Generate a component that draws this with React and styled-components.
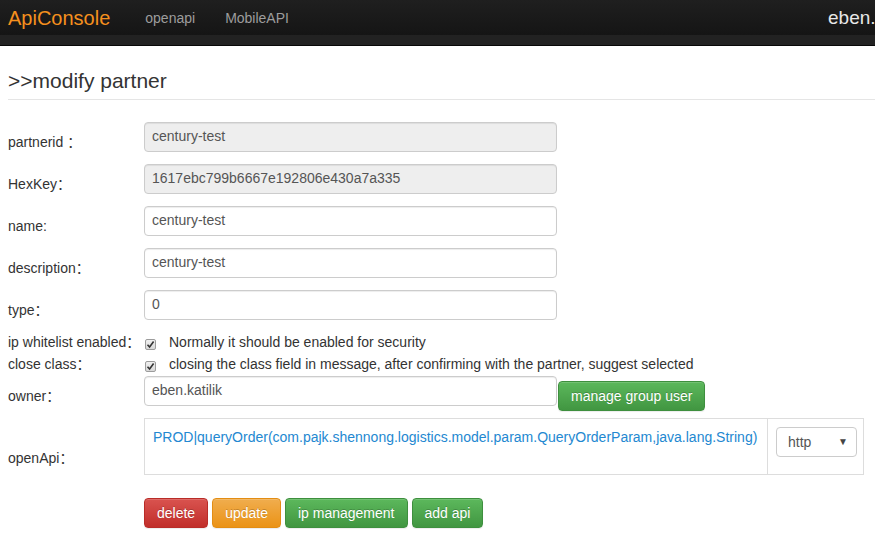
import React from "react";
import styled, { createGlobalStyle } from "styled-components";

const Global = createGlobalStyle`
  html, body { margin: 0; padding: 0; background: #fff; }
  body {
    font-family: "Liberation Sans", Arial, "Noto Sans CJK SC", sans-serif;
    font-size: 14px;
    line-height: 20px;
    color: #333;
    overflow: hidden;
  }
  * { box-sizing: border-box; }
`;

const Navbar = styled.div`
  background: #222;
  border-bottom: 1px solid #080808;
  height: 46px;
  overflow: hidden;
`;

const NavTop = styled.div`
  height: 35px;
  display: flex;
  align-items: center;
  padding-left: 8px;
  background: linear-gradient(#1f1f1f, #151515);
`;

const Brand = styled.span`
  font-size: 20px;
  color: #f5901e;
  margin-right: 35px;
  line-height: 30px;
`;

const NavLink = styled.span`
  color: #9d9d9d;
  font-size: 14px;
  margin-right: 30px;
`;

const NavUser = styled.span`
  margin-left: auto;
  flex: 0 0 47px;
  overflow: hidden;
  white-space: nowrap;
  color: #e8e8e8;
  font-size: 19px;
`;

const Page = styled.div`
  padding: 0 0 0 8px;
`;

const Title = styled.h3`
  margin: 0;
  padding-top: 24px;
  font-size: 21px;
  font-weight: normal;
  line-height: 22px;
  color: #333;
`;

const Rule = styled.hr`
  margin: 7px 0 22px;
  border: 0;
  border-top: 1px solid #e5e5e5;
`;

const Row = styled.div`
  display: grid;
  grid-template-columns: 136px auto;
  align-items: start;
  margin-bottom: ${(p) => p.$gap ?? 12}px;
`;

const Label = styled.div`
  padding-top: ${(p) => p.$pad ?? 10}px;
  white-space: nowrap;
`;

const Input = styled.div`
  width: 413px;
  height: 30px;
  padding: 0 7px;
  border: 1px solid #ccc;
  border-radius: 4px;
  background: ${(p) => (p.$disabled ? "#eee" : "#fff")};
  color: #555;
  line-height: 26px;
  box-shadow: inset 0 1px 1px rgba(0, 0, 0, 0.075);
`;

const CheckLine = styled.div`
  display: flex;
  align-items: center;
  gap: 13px;
  margin-left: 1px;
`;

const Box = styled.span`
  width: 11px;
  height: 11px;
  margin-top: 4px;
  border: 1px solid #9c9c9c;
  border-radius: 2px;
  background: linear-gradient(#f0f0f0, #d8d8d8);
  display: inline-flex;
  align-items: center;
  justify-content: center;
`;

const Inline = styled.div`
  display: flex;
  align-items: flex-start;
  gap: 1px;
`;

const Btn = styled.span`
  display: inline-block;
  height: 30px;
  padding: 0 12px;
  line-height: 28px;
  font-size: 14px;
  color: #fff;
  border-radius: 4px;
  border: 1px solid ${(p) => p.$border};
  background: linear-gradient(${(p) => p.$from}, ${(p) => p.$to});
  text-shadow: 0 -1px 0 rgba(0, 0, 0, 0.2);
  box-shadow: inset 0 1px 0 rgba(255, 255, 255, 0.15), 0 1px 1px rgba(0, 0, 0, 0.075);
  white-space: nowrap;
  margin-top: ${(p) => p.$mt ?? 0}px;
`;

const Buttons = styled.div`
  display: flex;
  gap: 4px;
`;

const ApiTable = styled.div`
  display: grid;
  grid-template-columns: 622px 98px;
  width: 720px;
  border: 1px solid #ddd;
  height: 57px;
`;

const Cell = styled.div`
  padding: 8px;
  & + & { border-left: 1px solid #ddd; }
`;

const ApiLink = styled.span`
  color: #2388d1;
  white-space: nowrap;
`;

const Select = styled.div`
  width: 81px;
  height: 30px;
  border: 1px solid #ccc;
  border-radius: 4px;
  display: flex;
  align-items: center;
  justify-content: space-between;
  padding: 0 8px 0 11px;
  color: #555;
`;

const Caret = styled.span`
  font-size: 10px;
  color: #444;
`;

const green = { $from: "#5cb85c", $to: "#419641", $border: "#3e8f3e" };

function Check() {
  return (
    <Box>
      <svg width="9" height="9" viewBox="0 0 9 9">
        <path d="M1.5 4.8 L3.6 7 L7.6 1.6" fill="none" stroke="#333" strokeWidth="1.6" />
      </svg>
    </Box>
  );
}

export default function App() {
  return (
    <>
      <Global />
      <Navbar>
        <NavTop>
          <Brand>ApiConsole</Brand>
          <NavLink>openapi</NavLink>
          <NavLink>MobileAPI</NavLink>
          <NavUser>eben.katilik</NavUser>
        </NavTop>
      </Navbar>
      <Page>
        <Title>&gt;&gt;modify partner</Title>
        <Rule />
        <Row>
          <Label>partnerid ：</Label>
          <Input $disabled>century-test</Input>
        </Row>
        <Row>
          <Label>HexKey：</Label>
          <Input $disabled>1617ebc799b6667e192806e430a7a335</Input>
        </Row>
        <Row>
          <Label>name:</Label>
          <Input>century-test</Input>
        </Row>
        <Row>
          <Label>description：</Label>
          <Input>century-test</Input>
        </Row>
        <Row>
          <Label>type：</Label>
          <Input>0</Input>
        </Row>
        <Row $gap={2}>
          <Label $pad={0}>ip whitelist enabled：</Label>
          <CheckLine>
            <Check />
            <span>Normally it should be enabled for security</span>
          </CheckLine>
        </Row>
        <Row $gap={2}>
          <Label $pad={0}>close class：</Label>
          <CheckLine>
            <Check />
            <span>closing the class field in message, after confirming with the partner, suggest selected</span>
          </CheckLine>
        </Row>
        <Row $gap={7}>
          <Label>owner：</Label>
          <Inline>
            <Input>eben.katilik</Input>
            <Btn {...green} $mt={5}>manage group user</Btn>
          </Inline>
        </Row>
        <Row $gap={23}>
          <Label $pad={30}>openApi：</Label>
          <ApiTable>
            <Cell>
              <ApiLink>PROD|queryOrder(com.pajk.shennong.logistics.model.param.QueryOrderParam,java.lang.String)</ApiLink>
            </Cell>
            <Cell>
              <Select>
                <span>http</span>
                <Caret>▼</Caret>
              </Select>
            </Cell>
          </ApiTable>
        </Row>
        <Row>
          <div />
          <Buttons>
            <Btn $from="#d9534f" $to="#c12e2a" $border="#b92c28">delete</Btn>
            <Btn $from="#f0ad4e" $to="#eb9316" $border="#e38d13">update</Btn>
            <Btn {...green}>ip management</Btn>
            <Btn {...green}>add api</Btn>
          </Buttons>
        </Row>
      </Page>
    </>
  );
}
